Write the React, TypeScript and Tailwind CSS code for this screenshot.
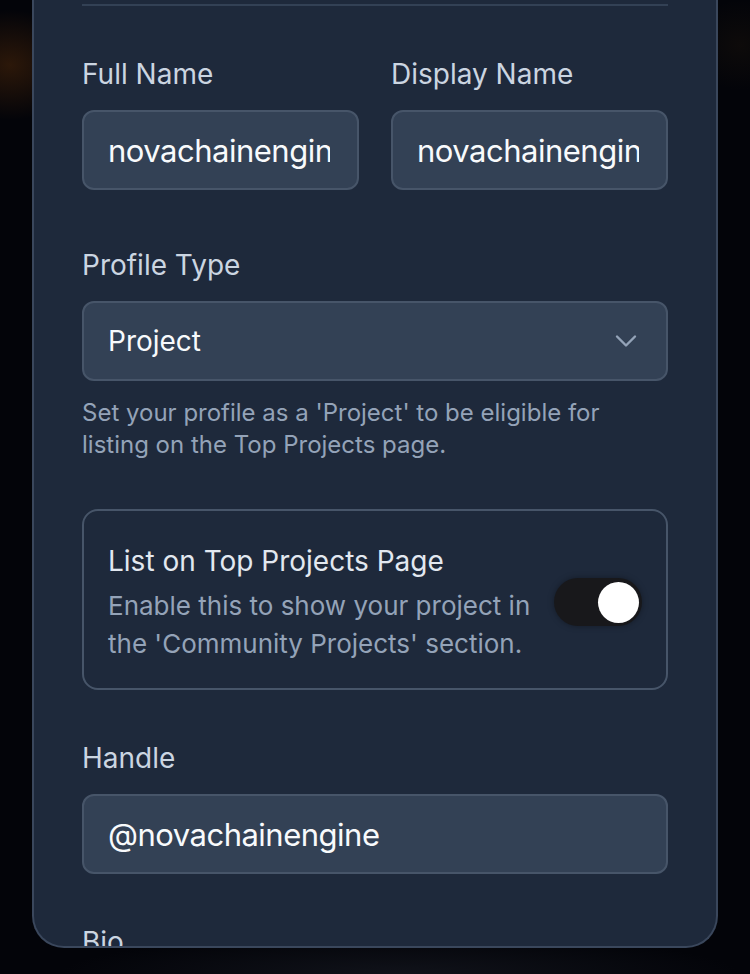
import React from "react";

function Field({ label, value }: { label: string; value: string }) {
  return (
    <div className="flex flex-col">
      <label className="text-[28px] leading-[40px] text-[#cbd5e1]">{label}</label>
      <input
        readOnly
        value={value}
        className="mt-[16px] h-[80px] w-full rounded-[12px] border-2 border-[#475569] bg-[#334155] pl-[24px] pr-[27px] text-[31px] tracking-[-0.5px] text-[#f8fafc] outline-none"
        style={{ fontFamily: "Inter, 'Noto Sans', sans-serif" }}
      />
    </div>
  );
}

export default function App() {
  return (
    <div
      className="relative h-[974px] w-[750px] overflow-hidden bg-[#030409]"
      style={{ fontFamily: "Inter, 'Noto Sans', sans-serif" }}
    >
      <div className="pointer-events-none absolute left-[-60px] top-[10px] h-[110px] w-[140px] rounded-full bg-[radial-gradient(closest-side,rgba(120,60,10,0.35),rgba(0,0,0,0))]" />
      <div className="pointer-events-none absolute right-[-40px] top-[0px] h-[90px] w-[100px] rounded-full bg-[radial-gradient(closest-side,rgba(90,60,20,0.12),rgba(0,0,0,0))]" />
      <div className="pointer-events-none absolute bottom-[-40px] left-[60px] h-[80px] w-[680px] rounded-full bg-[radial-gradient(closest-side,rgba(40,44,56,0.35),rgba(0,0,0,0))]" />

      <div className="relative ml-[32px] h-[948px] w-[686px] overflow-hidden rounded-b-[32px] border-x-2 border-b-2 border-[#3a475c] bg-[#1e293b]">
        <div className="px-[48px]">
          <div className="mt-[4px] h-[2px] bg-[#334155]" />

          <div className="mt-[48px] grid grid-cols-2 gap-[32px]">
            <Field label="Full Name" value="novachainengine" />
            <Field label="Display Name" value="novachainengine" />
          </div>

          <div className="mt-[55px] flex flex-col">
            <label className="text-[28px] leading-[40px] text-[#cbd5e1]">Profile Type</label>
            <div className="mt-[16px] flex h-[80px] items-center justify-between rounded-[12px] border-2 border-[#475569] bg-[#334155] pl-[24px] pr-[22px]">
              <span className="text-[28px] text-[#f8fafc]">Project</span>
              <svg width="36" height="36" viewBox="0 0 24 24" fill="none" stroke="#94a3b8" strokeWidth="1.6" strokeLinecap="round" strokeLinejoin="round">
                <path d="m6 9 6 6 6-6" />
              </svg>
            </div>
            <p className="mt-[16px] text-[24px] leading-[32px] text-[#94a3b8]">
              Set your profile as a 'Project' to be eligible for
              <br />
              listing on the Top Projects page.
            </p>
          </div>

          <div className="mt-[48px] flex items-center justify-between rounded-[16px] border-2 border-[#475569] pb-[25px] pl-[24px] pr-[24px] pt-[30px]">
            <div className="flex flex-col">
              <span className="text-[28px] leading-[40px] text-[#e2e8f0]">List on Top Projects Page</span>
              <span className="mt-[6px] text-[26px] leading-[38px] text-[#94a3b8]">
                Enable this to show your project in
                <br />
                the 'Community Projects' section.
              </span>
            </div>
            <div className="flex h-[48px] w-[88px] items-center justify-end rounded-full bg-[#18181b] p-[3px] shadow-[0_0_6px_rgba(0,0,0,0.35)]">
              <div className="h-[41px] w-[41px] rounded-full bg-white" />
            </div>
          </div>

          <div className="mt-[48px]">
            <Field label="Handle" value="@novachainengine" />
          </div>

          <div className="mt-[48px]">
            <label className="text-[28px] leading-[40px] text-[#cbd5e1]">Bio</label>
          </div>
        </div>
      </div>
    </div>
  );
}
